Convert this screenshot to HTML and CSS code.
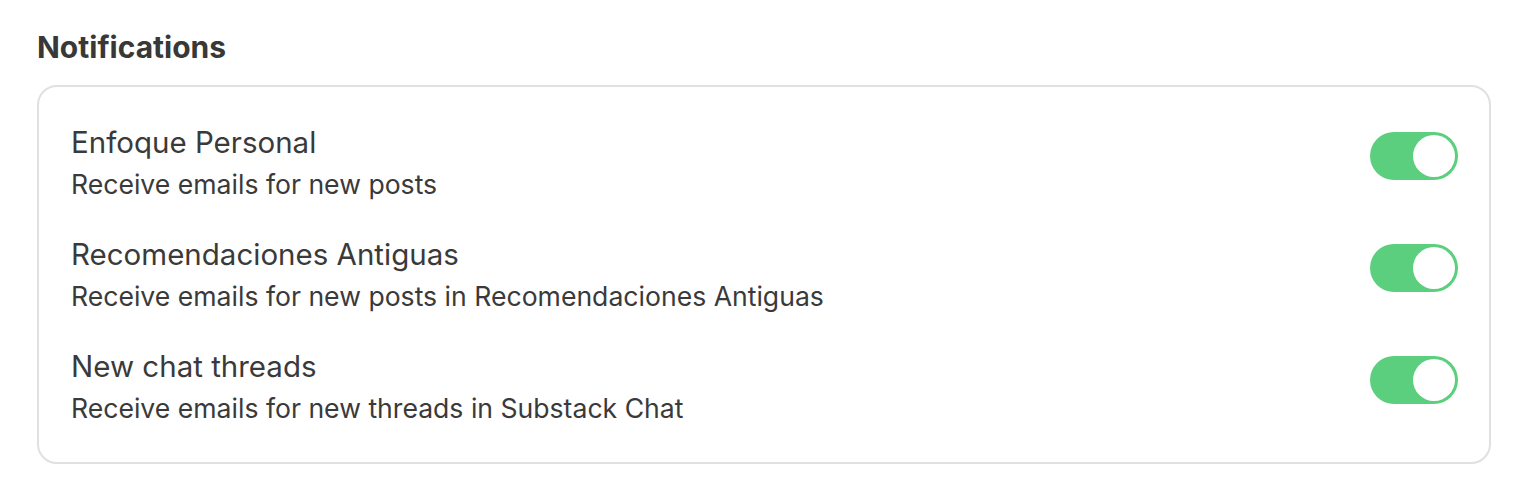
FILE: index.html
```html
<!DOCTYPE html>
<html>
<head>
<meta charset="utf-8">
<link rel="stylesheet" href="styles.css">
</head>
<body>
<div class="page">
  <h2 class="heading">Notifications</h2>
  <div class="card">
    <div class="row">
      <div class="text">
        <div class="title">Enfoque Personal</div>
        <div class="sub">Receive emails for new posts</div>
      </div>
      <div class="toggle"><span class="knob"></span></div>
    </div>
    <div class="row">
      <div class="text">
        <div class="title">Recomendaciones Antiguas</div>
        <div class="sub">Receive emails for new posts in Recomendaciones Antiguas</div>
      </div>
      <div class="toggle"><span class="knob"></span></div>
    </div>
    <div class="row">
      <div class="text">
        <div class="title">New chat threads</div>
        <div class="sub">Receive emails for new threads in Substack Chat</div>
      </div>
      <div class="toggle"><span class="knob"></span></div>
    </div>
  </div>
</div>
</body>
</html>
```
FILE: styles.css
```css
* { box-sizing: border-box; }
html, body { margin: 0; background: #fff; }
body { font-family: Inter, "Noto Sans", sans-serif; color: #3a3a3a; }
.page { padding: 29px 31px 0 37px; }
.heading { margin: 0 0 20px; font-size: 30px; font-weight: 700; line-height: 36px; color: #383838; }
.card { border: 2px solid #e0e0e0; border-radius: 20px; padding: 37px 31px 36px 32px; display: flex; flex-direction: column; gap: 34px; }
.row { display: flex; align-items: flex-start; justify-content: space-between; }
.text { display: flex; flex-direction: column; gap: 6px; }
.title { font-size: 29.5px; line-height: 36px; color: #3a3a3a; }
.sub { font-size: 26.6px; line-height: 36px; color: #3a3a3a; }
.toggle { margin-top: 8px; width: 88px; height: 48px; border-radius: 24px; background: #5bcf7d; padding: 3px; display: flex; justify-content: flex-end; }
.knob { width: 42px; height: 42px; border-radius: 50%; background: #fff; }
```
